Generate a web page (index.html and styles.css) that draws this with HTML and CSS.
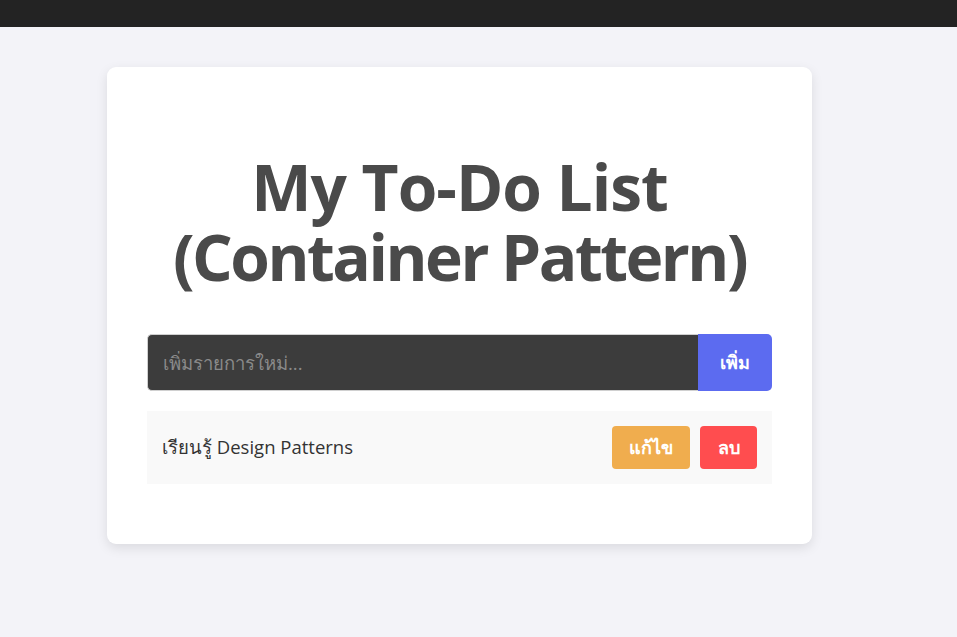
FILE: index.html
```html
<!DOCTYPE html>
<html lang="th">
<head>
<meta charset="utf-8">
<title>My To-Do List</title>
<link rel="stylesheet" href="styles.css">
</head>
<body>
<div class="topbar"></div>
<main class="page">
  <section class="card">
    <h1 class="title"><span class="title-line1">My To-Do List</span> <span class="title-line2">(Container Pattern)</span></h1>
    <form class="add-form">
      <input class="add-input" type="text" placeholder="เพิ่มรายการใหม่...">
      <button class="add-btn" type="button">เพิ่ม</button>
    </form>
    <ul class="todo-list">
      <li class="todo-item">
        <span class="todo-text">เรียนรู้ Design Patterns</span>
        <div class="todo-actions">
          <button class="btn btn-edit" type="button">แก้ไข</button>
          <button class="btn btn-delete" type="button">ลบ</button>
        </div>
      </li>
    </ul>
  </section>
</main>
</body>
</html>
```
FILE: styles.css
```css
* { box-sizing: border-box; }
html, body { margin: 0; padding: 0; }
body {
  background: #f3f3f8;
  font-family: "Open Sans", "Noto Sans", "DejaVu Sans", sans-serif;
  color: #333;
  height: 637px;
  overflow: hidden;
}
.topbar {
  height: 27px;
  background: #232323;
}
.page {
  padding: 40px 0 0 107px;
}
.card {
  width: 705px;
  background: #fff;
  border-radius: 9px;
  box-shadow: 0 4px 12px rgba(0, 0, 0, 0.1);
  padding: 40px;
}
.title {
  margin: 45px 0 42px;
  font-size: 64px;
  line-height: 70px;
  font-weight: 700;
  color: #4a4a4a;
  text-align: center;
}
.title-line1 { letter-spacing: -1px; }
.title-line2 { letter-spacing: -2.5px; }
.add-form {
  display: flex;
  margin: 0;
}
.add-input {
  flex: 1;
  height: 57px;
  margin: 0;
  padding: 0 15px;
  background: #3c3c3c;
  border: 1px solid #d0d0d0;
  border-right: none;
  border-radius: 5px 0 0 5px;
  font-family: inherit;
  font-size: 18.5px;
  color: #eee;
  outline: none;
}
.add-input::placeholder { color: #8a8a8a; }
.add-btn {
  width: 74px;
  height: 57px;
  margin: 0;
  border: none;
  border-radius: 0 5px 5px 0;
  background: #5c6bf0;
  color: #fff;
  font-family: inherit;
  font-size: 18px;
  font-weight: 700;
}
.todo-list {
  list-style: none;
  margin: 20px 0 20px;
  padding: 0;
}
.todo-item {
  display: flex;
  align-items: center;
  justify-content: space-between;
  height: 73px;
  padding: 0 15px;
  background: #f9f9f9;
}
.todo-text {
  font-size: 18.5px;
  color: #333;
}
.todo-actions {
  display: flex;
  gap: 10px;
}
.btn {
  height: 43px;
  border: none;
  border-radius: 4px;
  padding: 0 16px;
  color: #fff;
  font-family: inherit;
  font-size: 18px;
  font-weight: 700;
}
.btn-edit { background: #f0ad4e; width: 78px; }
.btn-delete { background: #ff4d4f; width: 57px; }
```
